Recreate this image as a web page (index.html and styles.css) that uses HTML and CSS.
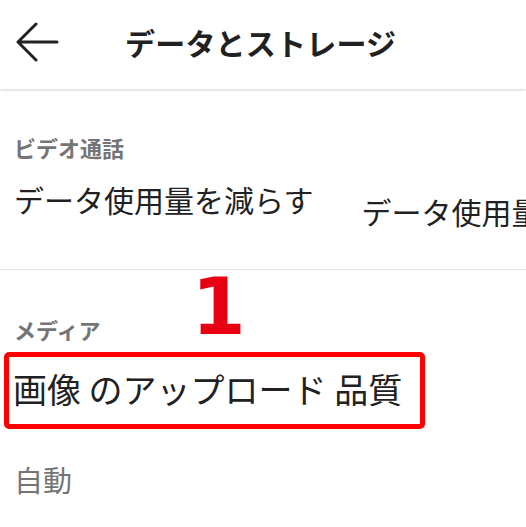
FILE: index.html
```html
<!DOCTYPE html>
<html lang="ja">
<head>
    <meta charset="UTF-8">
    <meta name="viewport" content="width=device-width, initial-scale=1.0">
    <title>データとストレージ</title>
    <link rel="stylesheet" href="styles.css">
</head>
<body>
    <header class="app-bar">
        <button type="button" class="back-btn" aria-label="戻る">
            <svg width="44" height="40" viewBox="0 0 44 40" aria-hidden="true">
                <path d="M42 20H3M21 2L3 20l18 18" fill="none" stroke="#222" stroke-width="3" stroke-linecap="round" stroke-linejoin="round"/>
            </svg>
        </button>
        <h1 class="app-title">データとストレージ</h1>
    </header>

    <main class="settings">
        <section class="settings-group">
            <h2 class="group-title">ビデオ通話</h2>
            <div class="option-scroller">
                <p class="option-label">データ使用量を減らす</p>
                <p class="option-label option-label--next">データ使用量</p>
            </div>
        </section>

        <section class="settings-group settings-group--media">
            <div class="media-head">
                <h2 class="group-title">メディア</h2>
                <span class="step-number">1</span>
            </div>
            <div class="highlight-box">
                <p class="option-label option-label--big">画像 のアップロード 品質</p>
            </div>
            <p class="option-value">自動</p>
        </section>
    </main>
</body>
</html>
```
FILE: styles.css
```css
:root {
    --text-color: #212121;
    --muted-color: #757575;
    --divider-color: #e3e3e3;
    --mark-red: #ff0000;
    --number-red: #e60012;
}

* {
    box-sizing: border-box;
}

body {
    margin: 0;
    width: 526px;
    height: 527px;
    overflow: hidden;
    background: #fff;
    color: var(--text-color);
    font-family: "Noto Sans CJK JP", "Noto Sans", sans-serif;
}

.app-bar {
    height: 89px;
    display: flex;
    align-items: center;
    padding: 0 0 6px 15px;
    box-shadow: 0 1px 3px rgba(0, 0, 0, 0.18);
    position: relative;
}

.back-btn {
    background: none;
    border: none;
    padding: 0;
    width: 44px;
    height: 40px;
    display: flex;
}

.app-title {
    margin: 0 0 0 66px;
    font-size: 30px;
    font-weight: 700;
    line-height: 1;
    letter-spacing: 0.2px;
}

.settings-group {
    padding: 0 0 0 14px;
}

.group-title {
    margin: 0;
    font-size: 22px;
    font-weight: 700;
    line-height: 1;
    color: var(--muted-color);
}

.settings-group:first-child {
    padding-top: 47px;
    height: 181px;
    border-bottom: 1px solid var(--divider-color);
}

.option-scroller {
    display: flex;
    gap: 48px;
    white-space: nowrap;
    margin-top: 20px;
}

.option-label {
    margin: 0;
    font-size: 30px;
    line-height: 1.4;
    font-weight: 400;
    flex-shrink: 0;
}

.option-label--next {
    margin-top: 12px;
}

.option-label--big {
    font-size: 34px;
    line-height: 1.3;
    white-space: nowrap;
}

.media-head {
    display: flex;
    align-items: flex-end;
    height: 70px;
}

.step-number {
    margin-left: 91px;
    font-family: "DejaVu Sans", sans-serif;
    font-weight: 700;
    font-size: 78px;
    line-height: 1;
    color: var(--number-red);
    margin-bottom: -6px;
}

.highlight-box {
    width: 421px;
    height: 77px;
    margin: 12px 0 0 -10px;
    padding: 0 0 2px 4px;
    border: 5px solid var(--mark-red);
    border-radius: 5px;
    display: flex;
    align-items: center;
}

.option-value {
    margin: 36px 0 0;
    font-size: 29px;
    line-height: 1;
    color: var(--muted-color);
}
```
